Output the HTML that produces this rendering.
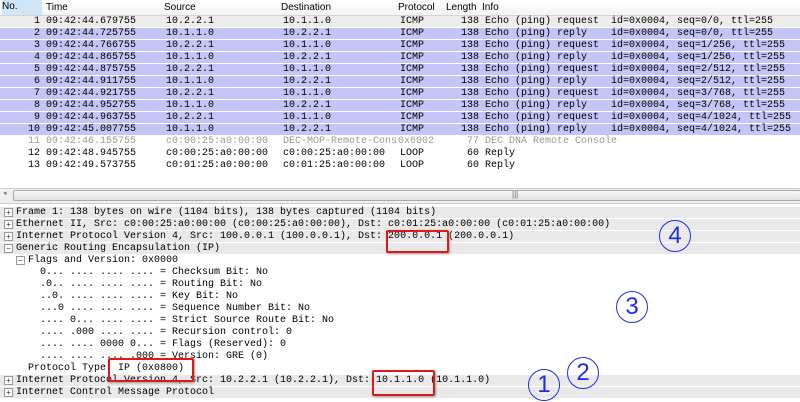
<!DOCTYPE html>
<html><head><style>
body{margin:0;width:800px;height:402px;overflow:hidden;background:#fff;position:relative;font-family:"Liberation Mono",monospace;font-size:10px;color:#000}
.hdr{position:absolute;left:0;top:0;width:800px;height:15px;background:linear-gradient(#fff,#f1f3f6);border-bottom:1px solid #d5d5d5;font-family:"Liberation Sans",sans-serif;font-size:10px;}
.hdr span{position:absolute;top:2px;}
.row{position:absolute;left:0;width:800px;height:11px;line-height:11px;white-space:pre;}
.row span{position:absolute;top:0}
.sel{background:#c4c4f6;}
.r1{background:#ececec;}
.dim{color:#9a9a9a}
.d{position:absolute;left:0;width:800px;height:11px;line-height:11px;white-space:pre;color:#000}
.g{background:#e9e9e9}
.pm{position:absolute;width:7px;height:7px;border:1px solid #999;background:#fff;font-size:8px;line-height:7px;text-align:center;color:#333;font-family:"Liberation Sans",sans-serif}
.c{position:absolute;width:30px;height:30px;border:1.5px solid #1f2cf0;border-radius:50%;color:#1f2cf0;font-family:"Liberation Sans",sans-serif;font-size:24px;line-height:30px;text-align:center}
.box{position:absolute;border:2px solid #e01818;border-radius:2px;box-shadow:1px 1px 2px #999}
</style></head><body>
<div class="hdr"><span style="left:2px;background:#cfe6f8;width:40px;top:0;height:15px;line-height:13px;padding-left:0">No.</span><span style="left:46px">Time</span><span style="left:164px">Source</span><span style="left:281px">Destination</span><span style="left:398px">Protocol</span><span style="left:446px">Length</span><span style="left:482px">Info</span></div>

<div class="row r1" style="top:16px"><span style="left:34px">1 09:42:44.679755</span><span style="left:166px">10.2.2.1</span><span style="left:283px">10.1.1.0</span><span style="left:400px">ICMP</span><span style="left:461px">138 Echo (ping) request  id=0x0004, seq=0/0, ttl=255</span></div>
<div class="row sel" style="top:28px"><span style="left:34px">2 09:42:44.725755</span><span style="left:166px">10.1.1.0</span><span style="left:283px">10.2.2.1</span><span style="left:400px">ICMP</span><span style="left:461px">138 Echo (ping) reply    id=0x0004, seq=0/0, ttl=255</span></div>
<div class="row sel" style="top:40px"><span style="left:34px">3 09:42:44.766755</span><span style="left:166px">10.2.2.1</span><span style="left:283px">10.1.1.0</span><span style="left:400px">ICMP</span><span style="left:461px">138 Echo (ping) request  id=0x0004, seq=1/256, ttl=255</span></div>
<div class="row sel" style="top:52px"><span style="left:34px">4 09:42:44.865755</span><span style="left:166px">10.1.1.0</span><span style="left:283px">10.2.2.1</span><span style="left:400px">ICMP</span><span style="left:461px">138 Echo (ping) reply    id=0x0004, seq=1/256, ttl=255</span></div>
<div class="row sel" style="top:64px"><span style="left:34px">5 09:42:44.875755</span><span style="left:166px">10.2.2.1</span><span style="left:283px">10.1.1.0</span><span style="left:400px">ICMP</span><span style="left:461px">138 Echo (ping) request  id=0x0004, seq=2/512, ttl=255</span></div>
<div class="row sel" style="top:76px"><span style="left:34px">6 09:42:44.911755</span><span style="left:166px">10.1.1.0</span><span style="left:283px">10.2.2.1</span><span style="left:400px">ICMP</span><span style="left:461px">138 Echo (ping) reply    id=0x0004, seq=2/512, ttl=255</span></div>
<div class="row sel" style="top:88px"><span style="left:34px">7 09:42:44.921755</span><span style="left:166px">10.2.2.1</span><span style="left:283px">10.1.1.0</span><span style="left:400px">ICMP</span><span style="left:461px">138 Echo (ping) request  id=0x0004, seq=3/768, ttl=255</span></div>
<div class="row sel" style="top:100px"><span style="left:34px">8 09:42:44.952755</span><span style="left:166px">10.1.1.0</span><span style="left:283px">10.2.2.1</span><span style="left:400px">ICMP</span><span style="left:461px">138 Echo (ping) reply    id=0x0004, seq=3/768, ttl=255</span></div>
<div class="row sel" style="top:112px"><span style="left:34px">9 09:42:44.963755</span><span style="left:166px">10.2.2.1</span><span style="left:283px">10.1.1.0</span><span style="left:400px">ICMP</span><span style="left:461px">138 Echo (ping) request  id=0x0004, seq=4/1024, ttl=255</span></div>
<div class="row sel" style="top:124px"><span style="left:28px">10 09:42:45.007755</span><span style="left:166px">10.1.1.0</span><span style="left:283px">10.2.2.1</span><span style="left:400px">ICMP</span><span style="left:461px">138 Echo (ping) reply    id=0x0004, seq=4/1024, ttl=255</span></div>
<div class="row dim" style="top:136px"><span style="left:28px">11 09:42:46.155755</span><span style="left:166px">c0:00:25:a0:00:00</span><span style="left:283px;width:113px;overflow:hidden">DEC-MOP-Remote-Cons</span><span style="left:398px">0x6002</span><span style="left:467px">77 DEC DNA Remote Console</span></div>
<div class="row" style="top:148px"><span style="left:28px">12 09:42:48.945755</span><span style="left:166px">c0:00:25:a0:00:00</span><span style="left:283px">c0:00:25:a0:00:00</span><span style="left:400px">LOOP</span><span style="left:467px">60 Reply</span></div>
<div class="row" style="top:160px"><span style="left:28px">13 09:42:49.573755</span><span style="left:166px">c0:01:25:a0:00:00</span><span style="left:283px">c0:01:25:a0:00:00</span><span style="left:400px">LOOP</span><span style="left:467px">60 Reply</span></div>

<div style="position:absolute;left:0;top:188px;width:800px;height:14px;background:#f0f0f0;border-top:1px solid #ccc;border-bottom:1px solid #ccc"></div>
<div style="position:absolute;left:13px;top:190px;width:786px;height:9px;border:1px solid #aaa;border-radius:2px;background:linear-gradient(#f8f8f8,#e0e0e0)"></div>
<div style="position:absolute;left:3px;top:189px;font-size:7px;color:#777">◂</div>
<div style="position:absolute;left:512px;top:190px;font-size:8px;color:#666;font-family:'Liberation Sans',sans-serif">|||</div>

<div class="d g" style="top:207px;padding-left:16px">Frame 1: 138 bytes on wire (1104 bits), 138 bytes captured (1104 bits)</div>
<div class="d g" style="top:219px;padding-left:16px">Ethernet II, Src: c0:00:25:a0:00:00 (c0:00:25:a0:00:00), Dst: c0:01:25:a0:00:00 (c0:01:25:a0:00:00)</div>
<div class="d g" style="top:231px;padding-left:16px">Internet Protocol Version 4, Src: 100.0.0.1 (100.0.0.1), Dst: 200.0.0.1 (200.0.0.1)</div>
<div class="d g" style="top:243px;padding-left:16px">Generic Routing Encapsulation (IP)</div>
<div class="d" style="top:255px;padding-left:28px">Flags and Version: 0x0000</div>
<div class="d" style="top:267px;padding-left:40px">0... .... .... .... = Checksum Bit: No</div>
<div class="d" style="top:279px;padding-left:40px">.0.. .... .... .... = Routing Bit: No</div>
<div class="d" style="top:291px;padding-left:40px">..0. .... .... .... = Key Bit: No</div>
<div class="d" style="top:303px;padding-left:40px">...0 .... .... .... = Sequence Number Bit: No</div>
<div class="d" style="top:315px;padding-left:40px">.... 0... .... .... = Strict Source Route Bit: No</div>
<div class="d" style="top:327px;padding-left:40px">.... .000 .... .... = Recursion control: 0</div>
<div class="d" style="top:339px;padding-left:40px">.... .... 0000 0... = Flags (Reserved): 0</div>
<div class="d" style="top:351px;padding-left:40px">.... .... .... .000 = Version: GRE (0)</div>
<div class="d" style="top:363px;padding-left:28px">Protocol Type: IP (0x0800)</div>
<div class="d g" style="top:375px;padding-left:16px">Internet Protocol Version 4, Src: 10.2.2.1 (10.2.2.1), Dst: 10.1.1.0 (10.1.1.0)</div>
<div class="d g" style="top:387px;padding-left:16px">Internet Control Message Protocol</div>

<div class="pm" style="left:4px;top:208px">+</div>
<div class="pm" style="left:4px;top:220px">+</div>
<div class="pm" style="left:4px;top:232px">+</div>
<div class="pm" style="left:4px;top:244px">−</div>
<div class="pm" style="left:16px;top:256px">−</div>
<div class="pm" style="left:4px;top:376px">+</div>
<div class="pm" style="left:4px;top:388px">+</div>

<div class="box" style="left:386px;top:230px;width:59px;height:19px"></div>
<div class="box" style="left:108px;top:358px;width:82px;height:20px"></div>
<div class="box" style="left:372px;top:370px;width:59px;height:22px"></div>

<div class="c" style="left:659px;top:220px">4</div>
<div class="c" style="left:616px;top:291px">3</div>
<div class="c" style="left:567px;top:357px">2</div>
<div class="c" style="left:528px;top:369px">1</div>
</body></html>
